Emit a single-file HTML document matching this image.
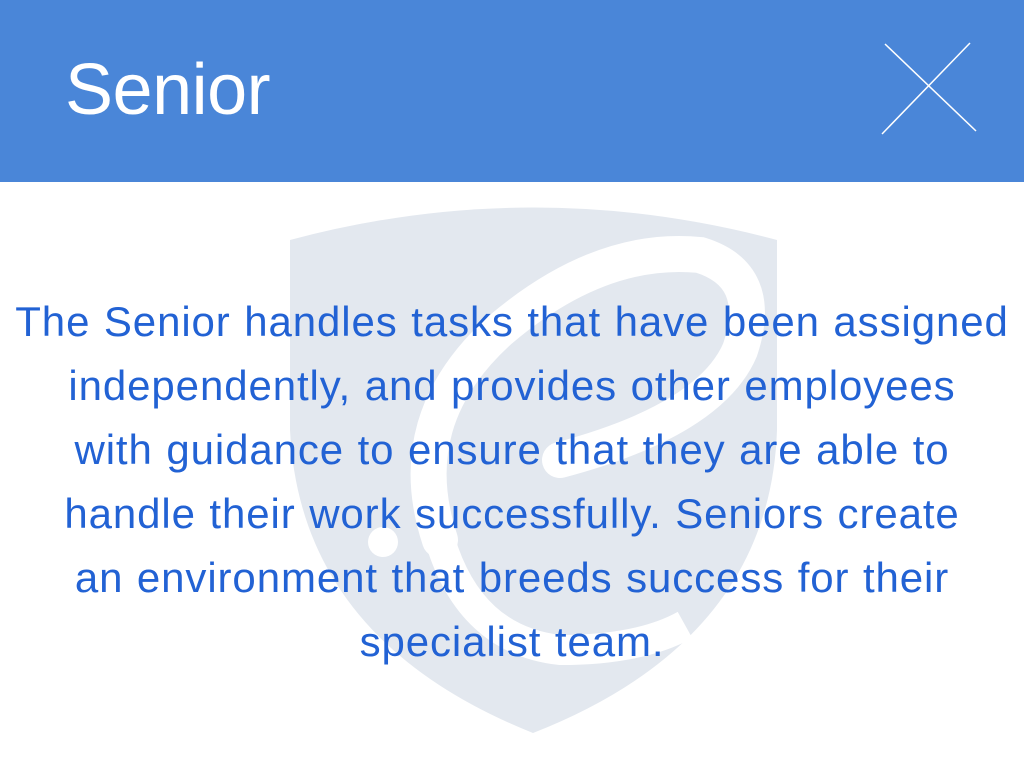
<!DOCTYPE html>
<html><head><style>
html,body{margin:0;padding:0;width:1024px;height:768px;overflow:hidden;background:#fff;font-family:"Liberation Sans",sans-serif}
#hdr{position:absolute;left:0;top:0;width:1024px;height:182px;background:#4a86d8}
#title{position:absolute;left:65px;top:48px;font-size:72px;color:#fff;font-weight:300;letter-spacing:-0.5px;line-height:84px}
#txt{position:absolute;left:0;top:290px;width:1024px;text-align:center;font-size:42px;line-height:64px;color:#2262d4;letter-spacing:0.9px;word-spacing:1px}
svg{position:absolute;left:0;top:0}
</style></head><body>
<svg width="1024" height="768">
<path d="M290 240 Q533 175 777 240 L777 430 Q770 640 533 733 Q300 640 290 430 Z" fill="#e3e8ef"/>
<path d="M440 540 Q400 420 500 330 Q600 245 700 255 Q765 275 740 350 Q710 420 560 460" fill="none" stroke="#fff" stroke-width="36" stroke-linecap="round"/>
<path d="M440 540 Q470 640 560 650 Q640 650 685 625" fill="none" stroke="#fff" stroke-width="30"/>
<circle cx="383" cy="542" r="15" fill="#fff"/>
</svg>
<div id="hdr"></div>
<div id="title">Senior</div>
<svg width="1024" height="182"><g stroke="#fff" stroke-width="1.5"><line x1="885" y1="44" x2="976" y2="131"/><line x1="970" y1="43" x2="882" y2="134"/></g></svg>
<div id="txt">The Senior handles tasks that have been assigned<br>independently, and provides other employees<br>with guidance to ensure that they are able to<br>handle their work successfully. Seniors create<br>an environment that breeds success for their<br>specialist team.</div>
</body></html>
